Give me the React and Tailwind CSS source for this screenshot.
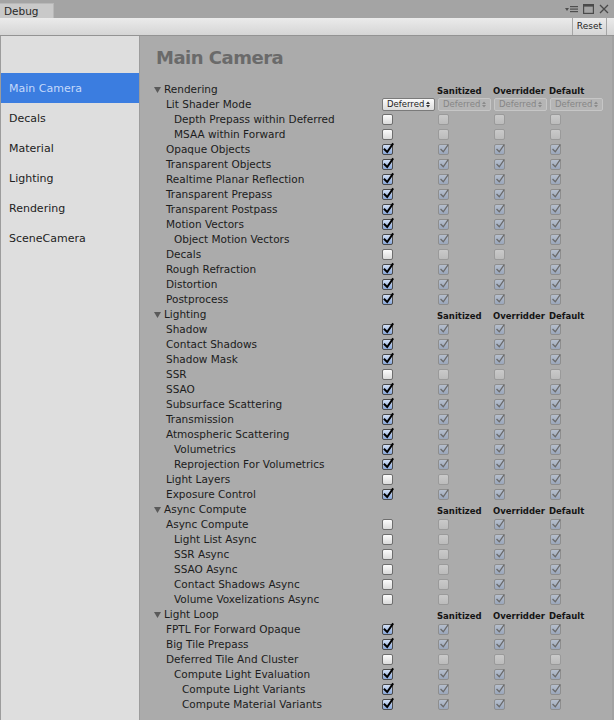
import React from "react";

const sections = [
  {
    title: "Rendering",
    rows: [
      { label: "Lit Shader Mode", level: 1, drop: true },
      { label: "Depth Prepass within Deferred", level: 2, v: [0, 0, 0, 0] },
      { label: "MSAA within Forward", level: 2, v: [0, 0, 0, 0] },
      { label: "Opaque Objects", level: 1, v: [1, 1, 1, 1] },
      { label: "Transparent Objects", level: 1, v: [1, 1, 1, 1] },
      { label: "Realtime Planar Reflection", level: 1, v: [1, 1, 1, 1] },
      { label: "Transparent Prepass", level: 1, v: [1, 1, 1, 1] },
      { label: "Transparent Postpass", level: 1, v: [1, 1, 1, 1] },
      { label: "Motion Vectors", level: 1, v: [1, 1, 1, 1] },
      { label: "Object Motion Vectors", level: 2, v: [1, 1, 1, 1] },
      { label: "Decals", level: 1, v: [0, 0, 0, 1] },
      { label: "Rough Refraction", level: 1, v: [1, 1, 1, 1] },
      { label: "Distortion", level: 1, v: [1, 1, 1, 1] },
      { label: "Postprocess", level: 1, v: [1, 1, 1, 1] },
    ],
  },
  {
    title: "Lighting",
    rows: [
      { label: "Shadow", level: 1, v: [1, 1, 1, 1] },
      { label: "Contact Shadows", level: 1, v: [1, 1, 1, 1] },
      { label: "Shadow Mask", level: 1, v: [1, 1, 1, 1] },
      { label: "SSR", level: 1, v: [0, 0, 0, 0] },
      { label: "SSAO", level: 1, v: [1, 1, 1, 1] },
      { label: "Subsurface Scattering", level: 1, v: [1, 1, 1, 1] },
      { label: "Transmission", level: 1, v: [1, 1, 1, 1] },
      { label: "Atmospheric Scattering", level: 1, v: [1, 1, 1, 1] },
      { label: "Volumetrics", level: 2, v: [1, 1, 1, 1] },
      { label: "Reprojection For Volumetrics", level: 2, v: [1, 1, 1, 1] },
      { label: "Light Layers", level: 1, v: [0, 0, 1, 1] },
      { label: "Exposure Control", level: 1, v: [1, 1, 1, 1] },
    ],
  },
  {
    title: "Async Compute",
    rows: [
      { label: "Async Compute", level: 1, v: [0, 0, 1, 1] },
      { label: "Light List Async", level: 2, v: [0, 0, 1, 1] },
      { label: "SSR Async", level: 2, v: [0, 0, 1, 1] },
      { label: "SSAO Async", level: 2, v: [0, 0, 1, 1] },
      { label: "Contact Shadows Async", level: 2, v: [0, 0, 1, 1] },
      { label: "Volume Voxelizations Async", level: 2, v: [0, 0, 1, 1] },
    ],
  },
  {
    title: "Light Loop",
    rows: [
      { label: "FPTL For Forward Opaque", level: 1, v: [1, 1, 1, 1] },
      { label: "Big Tile Prepass", level: 1, v: [1, 1, 1, 1] },
      { label: "Deferred Tile And Cluster", level: 1, v: [0, 0, 0, 0] },
      { label: "Compute Light Evaluation", level: 2, v: [1, 1, 1, 1] },
      { label: "Compute Light Variants", level: 3, v: [1, 1, 1, 1] },
      { label: "Compute Material Variants", level: 3, v: [1, 1, 1, 1] },
    ],
  },
];

const indent = { 1: "pl-[12px]", 2: "pl-[20px]", 3: "pl-[28px]" };

function Box({ on, enabled }) {
  let cls;
  if (enabled) {
    cls = on
      ? "border-[#4a4a4a] bg-linear-to-b from-[#d3e0f4] to-[#8aa8da]"
      : "border-[#6e6e6e] bg-linear-to-b from-[#fcfcfc] to-[#dadada]";
  } else {
    cls = on
      ? "border-[#8e8e8e] bg-linear-to-b from-[#b6bfcd] to-[#9aa6ba]"
      : "border-[#9a9a9a] bg-linear-to-b from-[#cacaca] to-[#bbbbbb]";
  }
  return (
    <div className={`relative ml-[1px] w-[11px] h-[11px] rounded-[2px] border ${cls}`}>
      {on ? (
        <svg
          className="absolute -top-[2px] left-[0px] overflow-visible"
          width="11"
          height="11"
          viewBox="0 0 11 11"
        >
          <path
            d={enabled ? "M1.6 6.4 L4.2 9 L9.6 1.2" : "M2 6.4 L4.3 8.8 L9 2"}
            fill="none"
            stroke={enabled ? "#000" : "#6a6a6a"}
            strokeWidth={enabled ? 2 : 1.3}
            strokeLinecap="square"
          />
        </svg>
      ) : null}
    </div>
  );
}

function Arrows({ color }) {
  return (
    <svg width="4" height="7" viewBox="0 0 4 7">
      <path d="M0 3 L2 0.5 L4 3 Z M0 4 L2 6.5 L4 4 Z" fill={color} />
    </svg>
  );
}

function Drop({ enabled }) {
  return (
    <div
      className={`ml-[1px] w-[53px] h-[13px] rounded-[2px] border flex items-center justify-between pl-[4px] pr-[4px] text-[8.5px] leading-[11px] ${
        enabled
          ? "border-[#7a7a7a] bg-linear-to-b from-[#fbfbfb] to-[#dcdcdc] text-[#1e1e1e]"
          : "border-[#c6c6c6] bg-[#b5b5b5] text-[#868686]"
      }`}
    >
      <span>Deferred</span>
      <Arrows color={enabled ? "#333" : "#8a8a8a"} />
    </div>
  );
}

function SectionRow({ title }) {
  return (
    <div className="flex h-[15px]">
      <div className="w-[227px] flex items-center">
        <svg width="7" height="6" viewBox="0 0 7 6" className="mr-[3px]">
          <path d="M0 0 L7 0 L3.5 6 Z" fill="#5a5a5a" />
        </svg>
        <span className="leading-[15px]">{title}</span>
      </div>
      <div className="w-[56px]" />
      {["Sanitized", "Overridder", "Default"].map((h) => (
        <div
          key={h}
          className="w-[56px] pt-[3px] leading-[12px] text-[8.5px] font-bold text-[#141414] whitespace-nowrap"
        >
          {h}
        </div>
      ))}
    </div>
  );
}

function Row({ row }) {
  return (
    <div className="flex h-[15px] items-center">
      <div className={`w-[227px] leading-[15px] whitespace-nowrap ${indent[row.level]}`}>
        {row.label}
      </div>
      {row.drop
        ? [0, 1, 2, 3].map((i) => (
            <div key={i} className="w-[56px] flex items-center">
              <Drop enabled={i === 0} />
            </div>
          ))
        : row.v.map((val, i) => (
            <div key={i} className="w-[56px] flex items-center">
              <Box on={!!val} enabled={i === 0} />
            </div>
          ))}
    </div>
  );
}

export default function App() {
  const side = ["Main Camera", "Decals", "Material", "Lighting", "Rendering", "SceneCamera"];
  return (
    <div className="w-[614px] h-[720px] bg-[#a4a4a4] flex flex-col overflow-hidden font-['DejaVu_Sans',sans-serif] text-[#1c1c1c]">
      {/* tab bar */}
      <div className="h-[18px] flex items-end shrink-0">
        <div className="h-[15px] w-[54px] bg-[#c9c9c9] border-t border-r border-[#b8b8b8] pl-[4px] text-[10.5px] leading-[14px] text-[#2a2a2a]">
          Debug
        </div>
        <div className="ml-auto self-start pt-[4px] pr-[5px] flex items-center gap-[5px]">
          <svg width="13" height="10" viewBox="0 0 13 10">
            <path d="M0 4 L4 4 L2 7 Z" fill="#4e4e4e" />
            <rect x="5" y="2" width="8" height="1.2" fill="#4e4e4e" />
            <rect x="5" y="4.5" width="8" height="1.2" fill="#4e4e4e" />
            <rect x="5" y="7" width="8" height="1.2" fill="#4e4e4e" />
          </svg>
          <svg width="11" height="10" viewBox="0 0 11 10">
            <rect x="0.6" y="0.6" width="9.8" height="8.8" fill="none" stroke="#4a4a4a" strokeWidth="1.2" />
            <rect x="0.6" y="0.6" width="9.8" height="2" fill="#4a4a4a" />
          </svg>
          <svg width="10" height="10" viewBox="0 0 10 10">
            <path d="M1 1 L9 9 M9 1 L1 9" stroke="#4a4a4a" strokeWidth="1.3" />
          </svg>
        </div>
      </div>
      {/* toolbar */}
      <div className="h-[18px] shrink-0 bg-linear-to-b from-[#ebebeb] to-[#d5d5d5] border-b border-[#939393] flex justify-end pr-[7px]">
        <div className="h-full px-[4px] border-x border-[#a6a6a6] text-[9px] leading-[17px] text-[#1e1e1e]">
          Reset
        </div>
      </div>
      {/* body */}
      <div className="flex flex-1 min-h-0">
        <div className="w-[140px] shrink-0 bg-[#dedede] border-l border-r border-[#9c9c9c] pt-[37px] text-[11px]">
          {side.map((s, i) => (
            <div
              key={s}
              className={`h-[30px] leading-[32px] pl-[8px] ${
                i === 0 ? "bg-[#3b7de0] text-[#c4d9fb]" : "text-[#222]"
              }`}
            >
              {s}
            </div>
          ))}
        </div>
        <div className="flex-1 bg-[#ababab] border-r-2 border-[#a2a2a2] pl-[14px] pt-[10px] text-[10.5px]">
          <div className="h-[24px] leading-[24px] text-[18px] font-bold tracking-[-0.5px] text-[#6a6a6a] pl-[2px]">
            Main Camera
          </div>
          <div className="mt-[12px]">
            {sections.map((sec) => (
              <div key={sec.title}>
                <SectionRow title={sec.title} />
                {sec.rows.map((r) => (
                  <Row key={sec.title + r.label} row={r} />
                ))}
              </div>
            ))}
          </div>
        </div>
      </div>
    </div>
  );
}
